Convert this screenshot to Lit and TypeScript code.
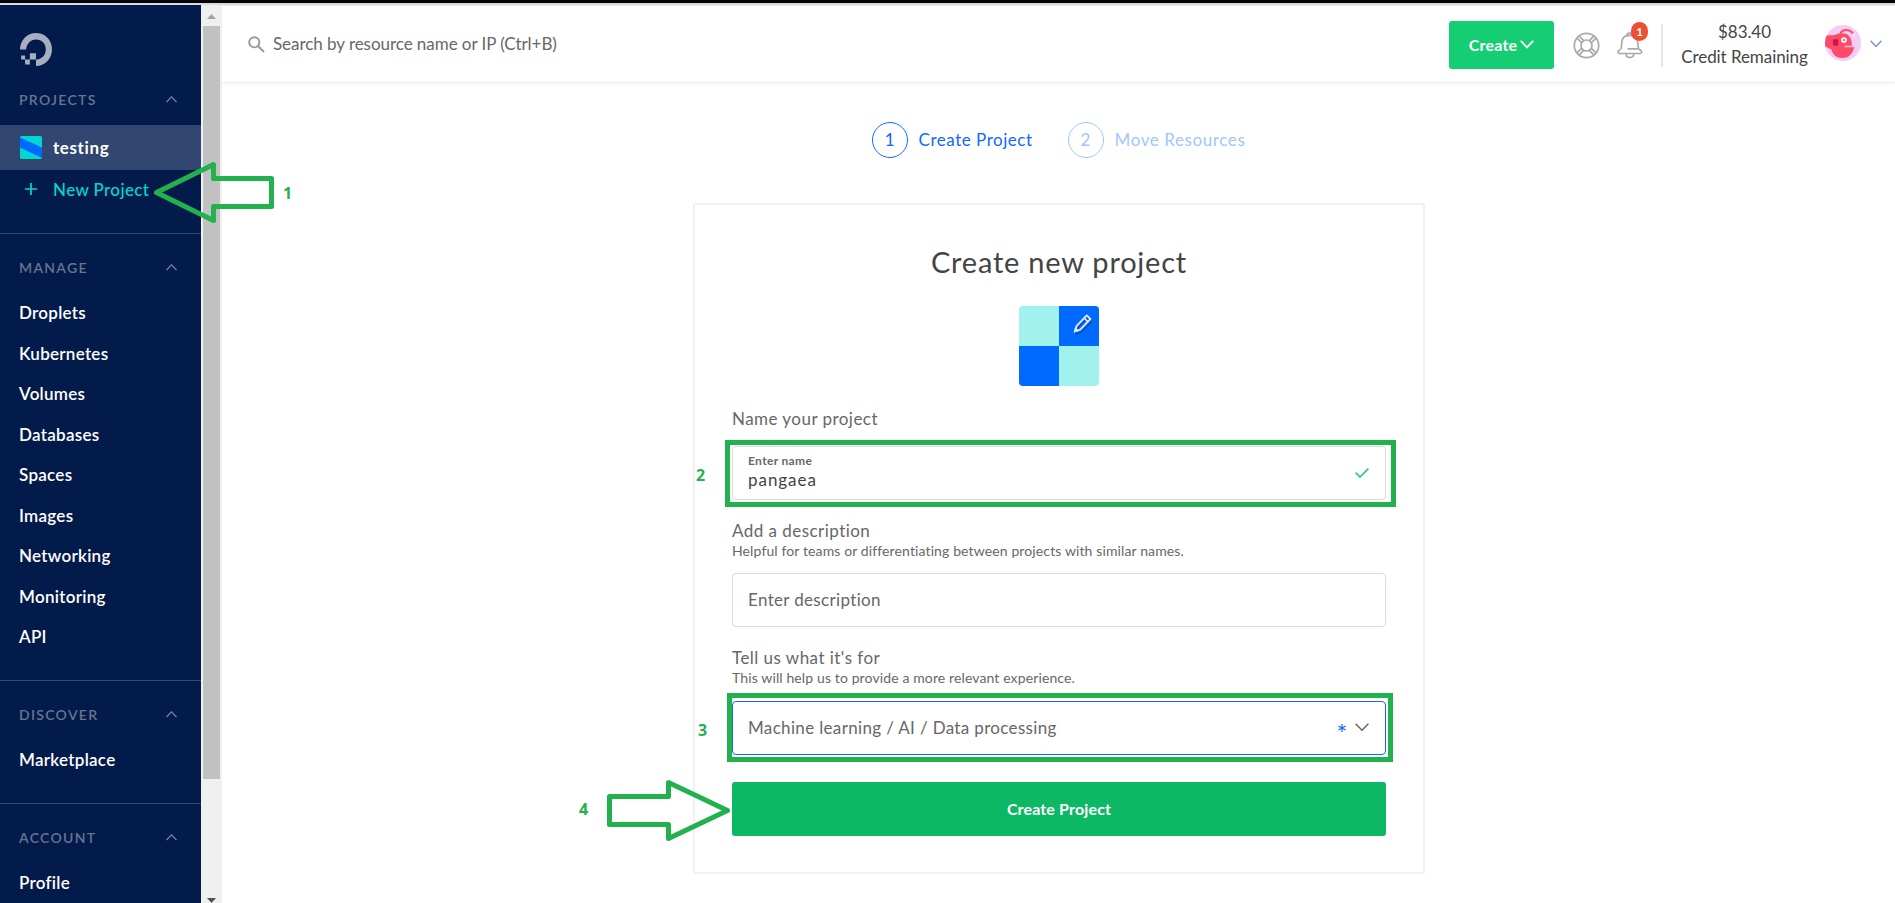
import { LitElement, html, css, svg, nothing } from "lit";
import { customElement, property } from "lit/decorators.js";
import { classMap } from "lit/directives/class-map.js";

const chevron = (points: string, w: number, h: number, width = 1.5) => html`
  <svg width=${w} height=${h} viewBox="0 0 ${w} ${h}" fill="none" stroke="currentColor" stroke-width=${width}>
    ${svg`<polyline points=${points} />`}
  </svg>`;

interface Section {
  title: string;
  items: string[];
}

const sections: Section[] = [
  {
    title: "MANAGE",
    items: ["Droplets", "Kubernetes", "Volumes", "Databases", "Spaces", "Images", "Networking", "Monitoring", "API"],
  },
  { title: "DISCOVER", items: ["Marketplace"] },
  { title: "ACCOUNT", items: ["Profile"] },
];

@customElement("side-nav")
class SideNav extends LitElement {
  static styles = css`
    :host {
      display: block;
      width: 201px;
      flex: none;
      overflow: hidden;
      background: #031b4b;
      color: #fff;
      font-weight: 600;
      font-size: 17px;
      letter-spacing: 0.28px;
    }
    svg { display: block; }
    .logo { padding: 28px 0 0 20px; color: #a6aec0; }
    .title {
      display: flex;
      justify-content: space-between;
      align-items: center;
      height: 18px;
      padding: 0 24px 2px 19px;
      color: #68758f;
      font-size: 14px;
      letter-spacing: 1.3px;
    }
    .title svg { color: #7583a0; }
    .projects { padding: 24px 0 23px; }
    .selected {
      display: flex;
      align-items: center;
      gap: 11px;
      height: 45px;
      margin-top: 15px;
      padding-left: 20px;
      background: #314670;
      font-weight: 700;
      letter-spacing: 0.6px;
    }
    .selected span { margin-top: -1px; }
    .new {
      display: flex;
      align-items: center;
      gap: 16px;
      height: 40px;
      padding-left: 25px;
      color: #00d7d2;
      letter-spacing: 0.38px;
      font-weight: 500;
    }
    .new svg, .new span { margin-top: -2px; }
    .section { border-top: 1px solid #35486f; padding: 24px 0 22.5px; }
    .items { margin-top: 15px; }
    .item { height: 40.5px; line-height: 40.5px; padding-left: 19px; }
  `;
  sectionTitle(t: string) {
    return html`<div class="title"><span>${t}</span>${chevron("0.5,6 5.5,0.8 10.5,6", 11, 7, 1.2)}</div>`;
  }
  render() {
    return html`
      <div class="logo">
        <svg width="32" height="33" viewBox="0 0 24 24" preserveAspectRatio="none" fill="currentColor">
          <path d="M12.04 0C5.408-.02.005 5.37.005 11.992h4.638c0-4.923 4.882-8.731 10.064-6.855a6.95 6.95 0 014.147 4.148c1.889 5.177-1.924 10.055-6.84 10.064v-4.61H7.391v4.623h4.61V24c7.86 0 13.967-7.588 11.397-15.83-1.115-3.59-3.985-6.446-7.575-7.575A12.8 12.8 0 0012.039 0zM7.39 19.362H3.828v3.564H7.39zm-3.563 0v-2.978H.85v2.978z"/>
        </svg>
      </div>
      <div class="projects">
        ${this.sectionTitle("PROJECTS")}
        <div class="selected">
          <svg width="22" height="23" viewBox="0 0 22 23">
            <rect width="22" height="23" rx="1.5" fill="#00d7d2"/>
            <path d="M0 1.5 L22 11.5 V22 L0 11.5Z" fill="#0069ff"/>
          </svg>
          <span>testing</span>
        </div>
        <div class="new">
          <svg width="12" height="12" viewBox="0 0 12 12" stroke="currentColor" stroke-width="1.7"><path d="M6 0V12M0 6H12"/></svg>
          <span>New Project</span>
        </div>
      </div>
      ${sections.map((s) => html`
        <div class="section">
          ${this.sectionTitle(s.title)}
          <div class="items">${s.items.map((i) => html`<div class="item">${i}</div>`)}</div>
        </div>`)}
    `;
  }
}

@customElement("scroll-track")
class ScrollTrack extends LitElement {
  static styles = css`
    :host {
      display: flex;
      flex-direction: column;
      align-items: center;
      flex: none;
      width: 21px;
      box-sizing: border-box;
      background: #f0f0f0;
    }
    svg { display: block; flex: none; }
    .up { margin-top: 9px; }
    .thumb { width: 17px; height: 754px; margin-top: 7px; background: #c1c1c1; }
    .down { margin-top: 119px; }
  `;
  render() {
    return html`
      <svg class="up" width="9" height="5"><path d="M0 5L4.5 0L9 5Z" fill="#a3a3a3"/></svg>
      <div class="thumb"></div>
      <svg class="down" width="9" height="5"><path d="M0 0H9L4.5 5Z" fill="#505050"/></svg>
    `;
  }
}

@customElement("top-bar")
class TopBar extends LitElement {
  static styles = css`
    :host {
      display: flex;
      align-items: center;
      height: 76px;
      flex: none;
      padding: 0 13px 0 26px;
      border-bottom: 1px solid #ededed;
      box-shadow: 0 2px 4px rgba(0, 0, 0, 0.03);
      font-size: 17px;
      color: #444;
    }
    svg { display: block; flex: none; }
    .search { display: flex; align-items: center; gap: 8px; flex: 1; color: #676767; letter-spacing: -0.05px; }
    .search span { margin-top: -2px; }
    .create {
      display: flex;
      align-items: center;
      justify-content: center;
      gap: 3px;
      width: 105px;
      height: 48px;
      margin: 2px 19px 0 0;
      border-radius: 3px;
      background: #15cd72;
      color: #fff;
      font-size: 16px;
      font-weight: 700;
      letter-spacing: 0.2px;
    }
    .create span { margin-top: -2px; }
    .create svg { margin-top: -2px; }
    .help { margin: 2px 17px 0 0; color: #a9a9a9; }
    .alerts { position: relative; color: #a9a9a9; margin: 2px 18px 0 0; }
    .badge {
      position: absolute;
      left: 14px;
      top: -10px;
      width: 17px;
      height: 19px;
      border-radius: 9px;
      background: #ed4f32;
      color: #fff;
      font-size: 11.5px;
      font-weight: 700;
      line-height: 19px;
      text-align: center;
    }
    .rule { width: 2px; height: 43px; background: #e5e5e5; margin: 3px 18px 0 0; }
    .credit {
      width: 127px;
      margin: 0 17px 0 0;
      text-align: center;
      line-height: 25px;
      letter-spacing: -0.07px;
      white-space: nowrap;
    }
    .avatar { margin: -2px 9px 0 0; }
    .menu { color: #8194b4; }
  `;
  render() {
    return html`
      <div class="search">
        <svg width="17" height="17" viewBox="0 0 17 17" fill="none" stroke="#999" stroke-width="1.9">
          <circle cx="6.3" cy="6.3" r="5.1"/><path d="M10 10L16 16"/>
        </svg>
        <span>Search by resource name or IP (Ctrl+B)</span>
      </div>
      <div class="create"><span>Create</span>${chevron("0.8,0.8 7,7.4 13.2,0.8", 14, 9, 1.8)}</div>
      <svg class="help" width="27" height="27" viewBox="0 0 27 27" fill="none" stroke="currentColor" stroke-width="1.7">
        <circle cx="13.5" cy="13.5" r="12.2"/><circle cx="13.5" cy="13.5" r="5.5"/>
        <path d="M8.3 10.4L4.2 6.3M10.4 8.3L6.3 4.2M18.7 10.4L22.8 6.3M16.6 8.3L20.7 4.2M8.3 16.6L4.2 20.7M10.4 18.7L6.3 22.8M18.7 16.6L22.8 20.7M16.6 18.7L20.7 22.8"/>
      </svg>
      <div class="alerts">
        <svg width="26" height="27" viewBox="0 0 26 27" fill="none" stroke="currentColor" stroke-width="1.7">
          <path d="M10 3.2C10 0.4 15 0.4 15 3.2M3.8 17.5C4.6 15.5 4.6 13.5 4.7 10.5C5 6 8 3.4 12.5 3.4C17 3.4 20.5 6 20.8 10.5C20.9 13.5 21.2 15 21.6 16.8H10.5"/>
          <path d="M3.3 17.6C0.2 18.6 0.4 21.5 2.6 21.5H22.8C25.4 21.5 25.4 18.4 22 17.4"/>
          <path d="M9 21.8C9.3 26.8 16.5 26.8 16.8 21.8"/>
        </svg>
        <span class="badge">1</span>
      </div>
      <div class="rule"></div>
      <div class="credit"><div>$83.40</div><div>Credit Remaining</div></div>
      <svg class="avatar" width="36" height="36" viewBox="0 0 36 36">
        <clipPath id="disc"><circle cx="18" cy="18" r="18"/></clipPath>
        <circle cx="18" cy="18" r="18" fill="#f3cdf8"/>
        <g clip-path="url(#disc)">
          <path d="M0 11C3 10 7 10.5 10 10C13 7.8 18 7.8 21.5 9C24.5 10.5 27 15 26.8 18.5V21H29.3C28.5 28.5 24 33 17.5 33C11.5 33 7.5 29.5 6.5 24.5C4 24 1.5 21.5 0 21.5Z" fill="#ff4a68"/>
          <path d="M15.5 8.5C17.5 4 24.5 3.6 28 8.4" fill="none" stroke="#ff4a68" stroke-width="2"/>
          <path d="M8 14.5Q11 13.8 13.2 14.5V20.5Q10 21 8 20.3Z" fill="#ce1350"/>
          <circle cx="19" cy="15" r="2.1" fill="#c98ab8" stroke="#fff" stroke-width="1.5"/>
          <path d="M19.5 21.5H29" stroke="#f9bdd5" stroke-width="1.5"/>
          <circle cx="28.8" cy="10.3" r="1" fill="#fff"/>
        </g>
      </svg>
      <span class="menu">${chevron("0.6,0.8 6,6.4 11.4,0.8", 12, 8, 1.5)}</span>
    `;
  }
}

@customElement("wizard-steps")
class WizardSteps extends LitElement {
  static styles = css`
    :host { display: flex; justify-content: center; gap: 35px; font-size: 17px; color: #0f69ff; }
    .step { display: flex; align-items: center; gap: 11px; letter-spacing: 0.52px; }
    .label { margin-top: -1px; }
    .pending { color: #9fc6ff; letter-spacing: 0.6px; }
    .number {
      width: 34px;
      height: 34px;
      border: 1px solid;
      border-radius: 50%;
      text-align: center;
      line-height: 34px;
      letter-spacing: 0;
    }
  `;
  render() {
    return html`${["Create Project", "Move Resources"].map((label, i) => html`
      <div class=${classMap({ step: true, pending: i > 0 })}>
        <span class="number">${i + 1}</span><span class="label">${label}</span>
      </div>`)}`;
  }
}

@customElement("form-group")
class FormGroup extends LitElement {
  @property() label = "";
  @property() hint = "";
  static styles = css`
    :host { display: flex; flex-direction: column; color: #676767; }
    .label { height: 19px; line-height: 20px; padding-top: 1px; font-size: 17px; letter-spacing: 0.46px; }
    .hint { height: 17px; line-height: 18px; padding-top: 2px; font-size: 14px; letter-spacing: 0.12px; }
  `;
  render() {
    return html`
      <div class="label">${this.label}</div>
      ${this.hint ? html`<div class="hint">${this.hint}</div>` : nothing}
      <slot></slot>
    `;
  }
}

@customElement("project-card")
class ProjectCard extends LitElement {
  static styles = css`
    :host {
      display: flex;
      flex-direction: column;
      box-sizing: border-box;
      width: 732px;
      padding: 39px 37px 36px;
      border: 2px solid #f1f1f1;
      border-radius: 3px;
    }
    svg { display: block; }
    .heading { text-align: center; font-size: 29px; line-height: 36px; color: #444; letter-spacing: 0.78px; }
    .icon { margin: 26px auto 22px; }
    .field {
      display: flex;
      align-items: center;
      justify-content: space-between;
      box-sizing: border-box;
      height: 54px;
      padding: 0 16px 1px 15px;
      border: 1px solid #dcdcdc;
      border-radius: 4px;
      font-size: 17px;
      letter-spacing: 0.34px;
      color: #676767;
    }
    .name { margin: 18px 0 20px; }
    .floating { font-size: 12px; font-weight: 700; line-height: 15px; margin-top: -2px; }
    .value { color: #444; line-height: 20px; letter-spacing: 0.95px; margin-top: 2px; }
    .description { margin: 14px 0 20px; }
    .purpose { margin: 15px 0 27px; border-color: #0f69ff; }
    .marks { display: flex; align-items: center; gap: 9px; }
    .submit {
      height: 54px;
      line-height: 54px;
      border-radius: 3px;
      background: #0cb863;
      color: #fff;
      text-align: center;
      font-size: 16px;
      font-weight: 700;
      letter-spacing: 0.15px;
    }
  `;
  render() {
    return html`
      <div class="heading">Create new project</div>
      <svg class="icon" width="80" height="80" viewBox="0 0 80 80">
        <clipPath id="tile"><rect width="80" height="80" rx="4"/></clipPath>
        <g clip-path="url(#tile)">
          <rect width="80" height="80" fill="#a1f2ee"/>
          <path d="M40 0H80V40H40ZM0 40H40V80H0Z" fill="#0069ff"/>
        </g>
        <path d="M56.5 26.5L57.8 21L67.6 10.8L71.6 14.8L61.6 25Z" transform="translate(0.6 1.2)" fill="none" stroke="#0a4fc0" stroke-width="1.8" stroke-linejoin="round"/>
        <path d="M56 25.3L57.6 20L67.8 9.4L71.4 13L61.2 23.6Z" fill="none" stroke="#dbe9ff" stroke-width="1.9" stroke-linejoin="round"/>
        <path d="M65.2 12L68.8 15.6M55.6 25.6L56.6 22.4L58.8 24.6Z" fill="#dbe9ff" stroke="#dbe9ff" stroke-width="1.5"/>
      </svg>
      <form-group label="Name your project">
        <div class="field name">
          <div><div class="floating">Enter name</div><div class="value">pangaea</div></div>
          <svg width="14" height="10" viewBox="0 0 14 10" fill="none" stroke="#26c97d" stroke-width="1.6"><path d="M0.6 4.6L5 9L13.4 0.6"/></svg>
        </div>
      </form-group>
      <form-group label="Add a description" hint="Helpful for teams or differentiating between projects with similar names.">
        <div class="field description">Enter description</div>
      </form-group>
      <form-group label="Tell us what it's for" hint="This will help us to provide a more relevant experience.">
        <div class="field purpose">
          <span>Machine learning / AI / Data processing</span>
          <span class="marks">
            <svg width="8" height="8" viewBox="0 0 8 8" stroke="#0f69ff" stroke-width="1.2"><path d="M4 0V8M0.4 2L7.6 6M7.6 2L0.4 6"/></svg>
            ${chevron("0.6,0.8 7,7.2 13.4,0.8", 14, 9, 1.5)}
          </span>
        </div>
      </form-group>
      <div class="submit">Create Project</div>
    `;
  }
}

@customElement("tutorial-marks")
class TutorialMarks extends LitElement {
  static styles = css`
    :host { position: absolute; inset: 0; pointer-events: none; }
    svg { display: block; }
    text { font: 700 16px "Open Sans", sans-serif; fill: #22b14c; }
  `;
  render() {
    return html`
      <svg width="1895" height="903" viewBox="0 0 1895 903" fill="none" stroke="#22b14c" stroke-width="5" stroke-linejoin="round">
        <path d="M156.5 192.5L213.5 164.5V178.5H271.5V206.5H213.5V220.5Z"/>
        <path d="M727.5 810.5L668.5 782.5V796.5H609.5V824.5H668.5V838.5Z"/>
        <g stroke-linejoin="miter">
          <rect x="727.5" y="442.5" width="666" height="62"/>
          <rect x="729.5" y="695.5" width="661" height="64"/>
        </g>
        <g stroke="none">
          <text x="283" y="199">1</text>
          <text x="696" y="481">2</text>
          <text x="698" y="736">3</text>
          <text x="579" y="815">4</text>
        </g>
      </svg>
    `;
  }
}

@customElement("app-root")
class AppRoot extends LitElement {
  static styles = css`
    :host {
      display: flex;
      flex-direction: column;
      position: relative;
      height: 903px;
      overflow: hidden;
      background: #fff;
      font-family: Lato, sans-serif;
    }
    .edge { height: 2px; flex: none; border-top: 3px solid #050505; background: #d9dbdf; }
    .body { display: flex; flex: 1; min-height: 0; }
    .main { display: flex; flex-direction: column; flex: 1; border-top: 1px solid #eaeaec; }
    .steps { margin: 39px 0 45px; }
    .card { align-self: center; margin-left: 1px; flex: none; }
  `;
  render() {
    return html`
      <div class="edge"></div>
      <div class="body">
        <side-nav></side-nav>
        <scroll-track></scroll-track>
        <div class="main">
          <top-bar></top-bar>
          <wizard-steps class="steps"></wizard-steps>
          <project-card class="card"></project-card>
        </div>
      </div>
      <tutorial-marks></tutorial-marks>
    `;
  }
}
